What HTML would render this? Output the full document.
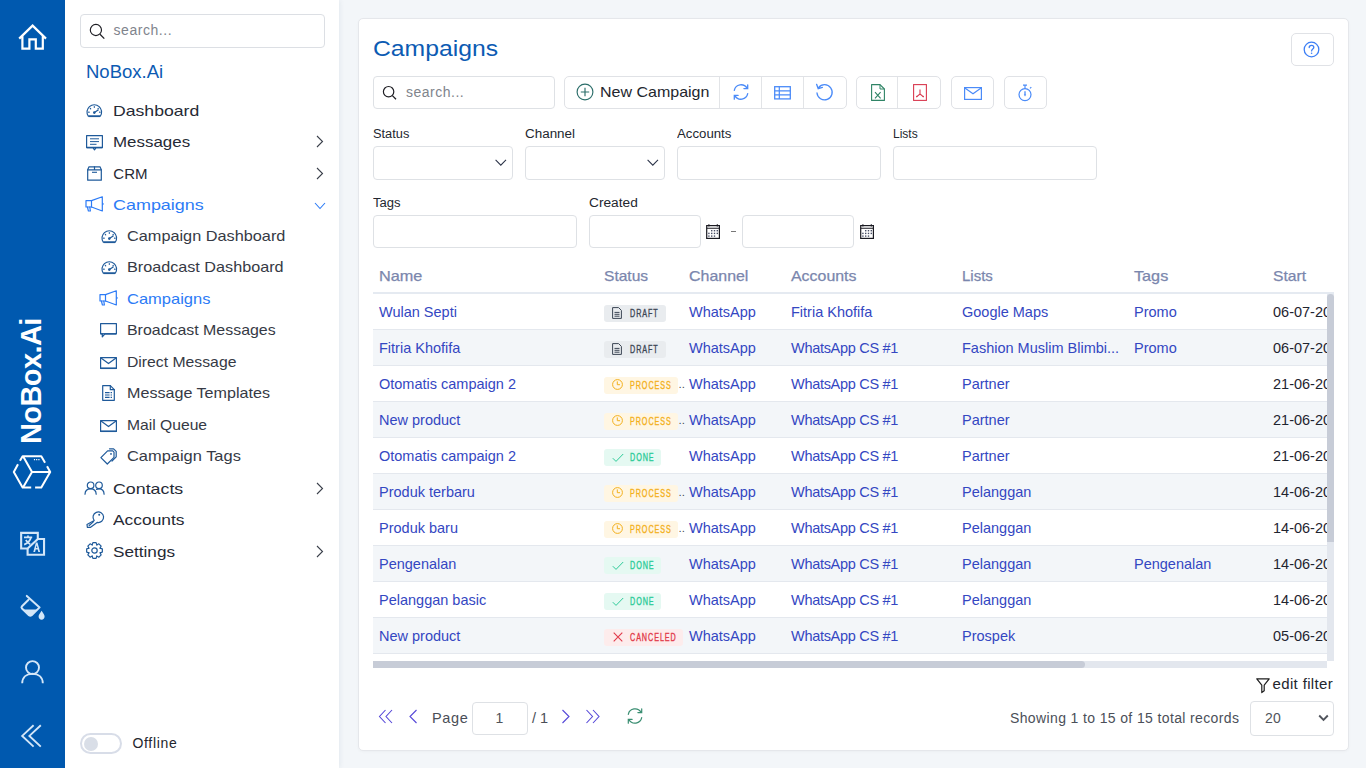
<!DOCTYPE html>
<html><head><meta charset="utf-8">
<style>
*{box-sizing:border-box;margin:0;padding:0}
html,body{width:1366px;height:768px;overflow:hidden;background:#F3F6F9;font-family:"Liberation Sans",sans-serif;color:#2B2F3A}
.abs{position:absolute}
#rail{position:absolute;left:0;top:0;width:65px;height:768px;background:#0059AF}
#side{position:absolute;left:65px;top:0;width:274px;height:768px;background:#fff;box-shadow:1px 0 5px rgba(20,50,100,0.07)}
.sbox{position:absolute;border:1px solid #DCDFE4;border-radius:4px;background:#fff}
.t{position:absolute;white-space:nowrap;line-height:1}
.mi{position:absolute;left:113.3px;font-size:15px;transform-origin:0 0;color:#2A2E39;white-space:nowrap;line-height:1}
.si{position:absolute;left:126.9px;font-size:14.5px;transform-origin:0 0;color:#3A3E48;white-space:nowrap;line-height:1}
.ico{position:absolute;overflow:visible}
#card{position:absolute;left:358px;top:18px;width:991px;height:733px;background:#fff;border:1px solid #E5E7EB;border-radius:5px;box-shadow:0 1px 3px rgba(0,0,0,0.03)}
.btn{position:absolute;border:1px solid #E0E2E6;border-radius:5px;background:#fff}
.lbl{position:absolute;font-size:12.5px;transform-origin:0 0;color:#23272F;white-space:nowrap;line-height:1}
.inp{position:absolute;border:1px solid #DEE1E5;border-radius:4px;background:#fff}
.th{position:absolute;top:269px;font-size:14.5px;transform-origin:0 0;-webkit-text-stroke:0.25px #7C88AC;color:#7A86AE;white-space:nowrap;line-height:1}
.row{position:absolute;left:373px;width:954px;height:36px;border-bottom:1px solid #E4E8EE}
.cell{position:absolute;font-size:14px;color:#3447C2;white-space:nowrap;line-height:1}
.badge{position:absolute;height:17px;border-radius:3px;font-size:10px;font-weight:normal;-webkit-text-stroke:0.35px currentColor;letter-spacing:1.3px;line-height:17.8px;white-space:nowrap}
</style></head><body>

<div id="rail"></div>
<div id="side"></div>
<div id="card"></div>
<div class="t" style="left:373px;top:37.6px;font-size:22px;transform:scaleX(1.124);transform-origin:0 0;color:#0C5BB3">Campaigns</div>
<!-- help -->
<div class="btn" style="left:1291px;top:33px;width:43px;height:33px"></div>
<svg class="ico" style="left:1303px;top:41px" width="17" height="17" viewBox="0 0 17 17"><circle cx="8.5" cy="8.5" r="7.3" fill="none" stroke="#3D7FF5" stroke-width="1.3"/><path fill="none" stroke="#3D7FF5" stroke-width="1.3" stroke-linecap="round" d="M6.2 6.6 C6.2 5.2 7.2 4.4 8.5 4.4 C9.8 4.4 10.8 5.2 10.8 6.5 C10.8 8 8.6 8.2 8.6 9.9"/><circle cx="8.6" cy="12.2" r="0.8" fill="#3D7FF5"/></svg>
<!-- search -->
<div class="inp" style="left:373px;top:76px;width:182px;height:33px"></div>
<svg class="ico" style="left:381px;top:84px" width="18" height="18" viewBox="0 0 18 18"><circle cx="7.6" cy="7.7" r="5.2" fill="none" stroke="#1E1E24" stroke-width="1.2"/><line x1="11.4" y1="11.6" x2="15" y2="15.2" stroke="#1E1E24" stroke-width="1.3"/></svg>
<div class="t" style="left:406px;top:84.7px;font-size:14px;letter-spacing:0.5px;color:#80848C">search...</div>
<!-- toolbar group 1 -->
<div class="btn" style="left:564px;top:76px;width:283px;height:33px"></div>
<div class="abs" style="left:719px;top:77px;width:1px;height:31px;background:#E2E4E7"></div>
<div class="abs" style="left:761px;top:77px;width:1px;height:31px;background:#E2E4E7"></div>
<div class="abs" style="left:803px;top:77px;width:1px;height:31px;background:#E2E4E7"></div>
<svg class="ico" style="left:576px;top:83px" width="18" height="18" viewBox="0 0 18 18"><circle cx="9" cy="9" r="7.9" fill="none" stroke="#2C6E6A" stroke-width="1.15"/><path stroke="#2C6E6A" stroke-width="1.15" d="M9 4.8V13.2M4.8 9H13.2"/></svg>
<div class="t" style="left:600px;top:84.3px;font-size:15px;transform:scaleX(1.067);transform-origin:0 0;color:#23262E">New Campaign</div>
<!-- refresh -->
<svg class="ico" style="left:732px;top:83px" width="18" height="18" viewBox="0 0 18 18"><path fill="none" stroke="#4B8BF8" stroke-width="1.3" stroke-linecap="round" d="M2.3 7.3 A6.9 6.9 0 0 1 15 5.2 M15.7 1.8 V5.6 H11.9 M15.7 10.7 A6.9 6.9 0 0 1 3 12.8 M2.3 16.2 V12.4 H6.1"/></svg>
<!-- table icon -->
<svg class="ico" style="left:774px;top:85.5px" width="17" height="14" viewBox="0 0 17 14"><rect x="0.7" y="0.7" width="15.6" height="12.2" fill="none" stroke="#4B8BF8" stroke-width="1.3"/><path stroke="#4B8BF8" stroke-width="1.2" d="M0.7 4.8H16.3M0.7 8.8H16.3M5.3 0.7V12.9"/></svg>
<!-- undo -->
<svg class="ico" style="left:815px;top:83px" width="19" height="18" viewBox="0 0 19 18"><path fill="none" stroke="#4B8BF8" stroke-width="1.3" stroke-linecap="round" d="M3.6 4.6 A7.6 7.6 0 1 1 2 10 M1.6 1.3 L3.2 5.6 L7.4 4.4"/></svg>
<!-- group 2 -->
<div class="btn" style="left:856px;top:76px;width:85px;height:33px"></div>
<div class="abs" style="left:897px;top:77px;width:1px;height:31px;background:#E2E4E7"></div>
<svg class="ico" style="left:870.5px;top:83.5px" width="14" height="17" viewBox="0 0 14 17"><path fill="none" stroke="#2F8466" stroke-width="1.1" stroke-linejoin="round" d="M0.6 0.6H9L13.4 5V16.4H0.6Z"/><path fill="none" stroke="#2F8466" stroke-width="1" d="M9 0.6V5H13.4"/><path fill="none" stroke="#2F8466" stroke-width="1.1" d="M4 8.2L9.6 14.4M9.6 8.2L4 14.4"/></svg>
<svg class="ico" style="left:912.5px;top:83.5px" width="14" height="17" viewBox="0 0 14 17"><rect x="0.6" y="0.6" width="12.8" height="15.8" fill="none" stroke="#D93A50" stroke-width="1.1"/><path fill="none" stroke="#D93A50" stroke-width="1.1" stroke-linejoin="round" d="M7 5.5V10 M7 10 L3.8 12.6 M7 10 L10.2 12.6"/><circle cx="3.8" cy="12.6" r="0.8" fill="#D93A50"/><circle cx="10.2" cy="12.6" r="0.8" fill="#D93A50"/></svg>
<!-- mail -->
<div class="btn" style="left:951px;top:76px;width:43px;height:33px"></div>
<svg class="ico" style="left:963.5px;top:86.5px" width="18" height="13" viewBox="0 0 18 13"><rect x="0.6" y="0.6" width="16.8" height="11.8" fill="none" stroke="#4B8BF8" stroke-width="1.2"/><path fill="none" stroke="#4B8BF8" stroke-width="1.2" d="M0.9 1L9 6.8L17.1 1"/></svg>
<!-- timer -->
<div class="btn" style="left:1004px;top:76px;width:43px;height:33px"></div>
<svg class="ico" style="left:1017.5px;top:83.5px" width="15" height="18" viewBox="0 0 15 18"><circle cx="7" cy="10.6" r="6" fill="none" stroke="#4B8BF8" stroke-width="1.2"/><path stroke="#4B8BF8" stroke-width="1.2" d="M5 1.2H9M7 1.2V4.6M12 4.4L13.3 3.1"/><path stroke="#4B8BF8" stroke-width="1.3" d="M7 7.2V11"/><path fill="#4B8BF8" d="M5.8 10.6 L8.2 10.6 L7 12.6Z"/></svg>
<!-- filters -->
<div class="lbl" style="left:373.0px;top:127.7px;transform:scaleX(1.025)">Status</div>
<div class="lbl" style="left:525.0px;top:127.7px;transform:scaleX(1.075)">Channel</div>
<div class="lbl" style="left:677.0px;top:127.7px;transform:scaleX(1.058)">Accounts</div>
<div class="lbl" style="left:893.0px;top:127.7px;transform:scaleX(0.96)">Lists</div>
<div class="inp" style="left:373px;top:146px;width:140px;height:34px"></div>
<svg class="ico" style="left:495px;top:159px" width="12" height="8" viewBox="0 0 12 8"><path fill="none" stroke="#2B3348" stroke-width="1.05" d="M0.6 0.8L5.8 6.2L11 0.8"/></svg>
<div class="inp" style="left:525px;top:146px;width:140px;height:34px"></div>
<svg class="ico" style="left:647px;top:159px" width="12" height="8" viewBox="0 0 12 8"><path fill="none" stroke="#2B3348" stroke-width="1.05" d="M0.6 0.8L5.8 6.2L11 0.8"/></svg>
<div class="inp" style="left:677px;top:146px;width:204px;height:34px"></div>
<div class="inp" style="left:893px;top:146px;width:204px;height:34px"></div>
<div class="lbl" style="left:373.0px;top:196.5px;transform:scaleX(1.045)">Tags</div>
<div class="lbl" style="left:588.5px;top:196.5px;transform:scaleX(1.097)">Created</div>
<div class="inp" style="left:373px;top:215px;width:204px;height:33px"></div>
<div class="inp" style="left:589px;top:215px;width:112px;height:33px"></div>
<div class="inp" style="left:742px;top:215px;width:112px;height:33px"></div>
<svg class="ico" style="left:705px;top:222.5px" width="16" height="17" viewBox="0 0 16 17"><rect x="1.7" y="2.6" width="12.7" height="12.8" fill="none" stroke="#1A1A22" stroke-width="1.2"/><path stroke="#1A1A22" stroke-width="1.1" d="M1.7 5.2H14.4M3.9 1.2V3.4M12.3 1.2V3.4"/><g fill="#4A4F66"><rect x="6.0" y="7.0" width="1.4" height="1.4"/><rect x="8.8" y="7.0" width="1.4" height="1.4"/><rect x="11.6" y="7.0" width="1.4" height="1.4"/><rect x="3.2" y="9.7" width="1.4" height="1.4"/><rect x="6.0" y="9.7" width="1.4" height="1.4"/><rect x="8.8" y="9.7" width="1.4" height="1.4"/><rect x="11.6" y="9.7" width="1.4" height="1.4"/><rect x="3.2" y="12.4" width="1.4" height="1.4"/><rect x="6.0" y="12.4" width="1.4" height="1.4"/><rect x="8.8" y="12.4" width="1.4" height="1.4"/></g></svg>
<div class="abs" style="left:731px;top:231px;width:5px;height:1.2px;background:#777"></div>
<svg class="ico" style="left:859px;top:222.5px" width="16" height="17" viewBox="0 0 16 17"><rect x="1.7" y="2.6" width="12.7" height="12.8" fill="none" stroke="#1A1A22" stroke-width="1.2"/><path stroke="#1A1A22" stroke-width="1.1" d="M1.7 5.2H14.4M3.9 1.2V3.4M12.3 1.2V3.4"/><g fill="#4A4F66"><rect x="6.0" y="7.0" width="1.4" height="1.4"/><rect x="8.8" y="7.0" width="1.4" height="1.4"/><rect x="11.6" y="7.0" width="1.4" height="1.4"/><rect x="3.2" y="9.7" width="1.4" height="1.4"/><rect x="6.0" y="9.7" width="1.4" height="1.4"/><rect x="8.8" y="9.7" width="1.4" height="1.4"/><rect x="11.6" y="9.7" width="1.4" height="1.4"/><rect x="3.2" y="12.4" width="1.4" height="1.4"/><rect x="6.0" y="12.4" width="1.4" height="1.4"/><rect x="8.8" y="12.4" width="1.4" height="1.4"/></g></svg>

<!-- table header -->
<div class="th" style="left:379px;transform:scaleX(1.12)">Name</div>
<div class="th" style="left:604px;transform:scaleX(1.073)">Status</div>
<div class="th" style="left:689px;transform:scaleX(1.10)">Channel</div>
<div class="th" style="left:791px;transform:scaleX(1.098)">Accounts</div>
<div class="th" style="left:962px;transform:scaleX(1.035)">Lists</div>
<div class="th" style="left:1134px;transform:scaleX(1.118)">Tags</div>
<div class="th" style="left:1273px;transform:scaleX(1.078)">Start</div>
<div class="abs" style="left:0;top:0;width:1327px;height:661px;overflow:hidden">
<div class="row" style="top:294px;background:#fff"></div>
<div class="t" style="left:379px;top:304.9px;font-size:14.5px;color:#3447C2">Wulan Septi</div>
<div class="badge" style="left:604px;top:305px;width:62px;background:#E9ECEF;color:#3C4654"><svg class="ico" style="left:8px;top:2px" width="10" height="12" viewBox="0 0 10 12"><path fill="none" stroke="#3C4654" stroke-width="1" d="M0.6 0.6H6.6L9.4 3.4V11.4H0.6Z"/><path fill="none" stroke="#3C4654" stroke-width="1" d="M2.5 5.4H7.5M2.5 7.3H7.5M2.5 9.2H7.5"/></svg><span style="position:absolute;left:25.6px;top:0;transform:scaleX(0.72);transform-origin:0 0">DRAFT</span></div>
<div class="t" style="left:689px;top:304.9px;font-size:14.5px;color:#3447C2">WhatsApp</div>
<div class="t" style="left:791px;top:304.9px;font-size:14.5px;color:#3447C2">Fitria Khofifa</div>
<div class="t" style="left:962px;top:304.9px;font-size:14.5px;color:#3447C2">Google Maps</div>
<div class="t" style="left:1134px;top:304.9px;font-size:14.5px;color:#3447C2">Promo</div>
<div class="t" style="left:1273px;top:304.9px;font-size:14.5px;color:#1F2430">06-07-2023</div>
<div class="row" style="top:330px;background:#F3F6F9"></div>
<div class="t" style="left:379px;top:340.9px;font-size:14.5px;color:#3447C2">Fitria Khofifa</div>
<div class="badge" style="left:604px;top:341px;width:62px;background:#E9ECEF;color:#3C4654"><svg class="ico" style="left:8px;top:2px" width="10" height="12" viewBox="0 0 10 12"><path fill="none" stroke="#3C4654" stroke-width="1" d="M0.6 0.6H6.6L9.4 3.4V11.4H0.6Z"/><path fill="none" stroke="#3C4654" stroke-width="1" d="M2.5 5.4H7.5M2.5 7.3H7.5M2.5 9.2H7.5"/></svg><span style="position:absolute;left:25.6px;top:0;transform:scaleX(0.72);transform-origin:0 0">DRAFT</span></div>
<div class="t" style="left:689px;top:340.9px;font-size:14.5px;color:#3447C2">WhatsApp</div>
<div class="t" style="left:791px;top:340.9px;font-size:14.5px;color:#3447C2;letter-spacing:-0.3px">WhatsApp CS #1</div>
<div class="t" style="left:962px;top:340.9px;font-size:14.5px;color:#3447C2">Fashion Muslim Blimbi...</div>
<div class="t" style="left:1134px;top:340.9px;font-size:14.5px;color:#3447C2">Promo</div>
<div class="t" style="left:1273px;top:340.9px;font-size:14.5px;color:#1F2430">06-07-2023</div>
<div class="row" style="top:366px;background:#fff"></div>
<div class="t" style="left:379px;top:376.9px;font-size:14.5px;color:#3447C2">Otomatis campaign 2</div>
<div class="badge" style="left:604px;top:377px;width:74px;background:#FFF6E3;color:#F3B01C"><svg class="ico" style="left:8px;top:2px" width="11" height="11" viewBox="0 0 11 11"><circle cx="5.5" cy="5.5" r="4.9" fill="none" stroke="#F3B01C" stroke-width="1"/><path fill="none" stroke="#F3B01C" stroke-width="1" d="M5.3 2.4V5.7H8"/></svg><span style="position:absolute;left:25.6px;top:0;transform:scaleX(0.72);transform-origin:0 0">PROCESS</span></div>
<div class="t" style="left:678.5px;top:379.4px;font-size:11.5px;color:#4A4A50">..</div>
<div class="t" style="left:689px;top:376.9px;font-size:14.5px;color:#3447C2">WhatsApp</div>
<div class="t" style="left:791px;top:376.9px;font-size:14.5px;color:#3447C2;letter-spacing:-0.3px">WhatsApp CS #1</div>
<div class="t" style="left:962px;top:376.9px;font-size:14.5px;color:#3447C2">Partner</div>
<div class="t" style="left:1273px;top:376.9px;font-size:14.5px;color:#1F2430">21-06-2023</div>
<div class="row" style="top:402px;background:#F3F6F9"></div>
<div class="t" style="left:379px;top:412.9px;font-size:14.5px;color:#3447C2">New product</div>
<div class="badge" style="left:604px;top:413px;width:74px;background:#FFF6E3;color:#F3B01C"><svg class="ico" style="left:8px;top:2px" width="11" height="11" viewBox="0 0 11 11"><circle cx="5.5" cy="5.5" r="4.9" fill="none" stroke="#F3B01C" stroke-width="1"/><path fill="none" stroke="#F3B01C" stroke-width="1" d="M5.3 2.4V5.7H8"/></svg><span style="position:absolute;left:25.6px;top:0;transform:scaleX(0.72);transform-origin:0 0">PROCESS</span></div>
<div class="t" style="left:678.5px;top:415.4px;font-size:11.5px;color:#4A4A50">..</div>
<div class="t" style="left:689px;top:412.9px;font-size:14.5px;color:#3447C2">WhatsApp</div>
<div class="t" style="left:791px;top:412.9px;font-size:14.5px;color:#3447C2;letter-spacing:-0.3px">WhatsApp CS #1</div>
<div class="t" style="left:962px;top:412.9px;font-size:14.5px;color:#3447C2">Partner</div>
<div class="t" style="left:1273px;top:412.9px;font-size:14.5px;color:#1F2430">21-06-2023</div>
<div class="row" style="top:438px;background:#fff"></div>
<div class="t" style="left:379px;top:448.9px;font-size:14.5px;color:#3447C2">Otomatis campaign 2</div>
<div class="badge" style="left:604px;top:449px;width:57px;background:#E5F9F2;color:#2CCB98"><svg class="ico" style="left:8px;top:3.5px" width="12" height="10" viewBox="0 0 12 10"><path fill="none" stroke="#2CCB98" stroke-width="1" d="M0.8 5.2L4 8.4L11.2 1"/></svg><span style="position:absolute;left:25.6px;top:0;transform:scaleX(0.72);transform-origin:0 0">DONE</span></div>
<div class="t" style="left:689px;top:448.9px;font-size:14.5px;color:#3447C2">WhatsApp</div>
<div class="t" style="left:791px;top:448.9px;font-size:14.5px;color:#3447C2;letter-spacing:-0.3px">WhatsApp CS #1</div>
<div class="t" style="left:962px;top:448.9px;font-size:14.5px;color:#3447C2">Partner</div>
<div class="t" style="left:1273px;top:448.9px;font-size:14.5px;color:#1F2430">21-06-2023</div>
<div class="row" style="top:474px;background:#F3F6F9"></div>
<div class="t" style="left:379px;top:484.9px;font-size:14.5px;color:#3447C2">Produk terbaru</div>
<div class="badge" style="left:604px;top:485px;width:74px;background:#FFF6E3;color:#F3B01C"><svg class="ico" style="left:8px;top:2px" width="11" height="11" viewBox="0 0 11 11"><circle cx="5.5" cy="5.5" r="4.9" fill="none" stroke="#F3B01C" stroke-width="1"/><path fill="none" stroke="#F3B01C" stroke-width="1" d="M5.3 2.4V5.7H8"/></svg><span style="position:absolute;left:25.6px;top:0;transform:scaleX(0.72);transform-origin:0 0">PROCESS</span></div>
<div class="t" style="left:678.5px;top:487.4px;font-size:11.5px;color:#4A4A50">..</div>
<div class="t" style="left:689px;top:484.9px;font-size:14.5px;color:#3447C2">WhatsApp</div>
<div class="t" style="left:791px;top:484.9px;font-size:14.5px;color:#3447C2;letter-spacing:-0.3px">WhatsApp CS #1</div>
<div class="t" style="left:962px;top:484.9px;font-size:14.5px;color:#3447C2">Pelanggan</div>
<div class="t" style="left:1273px;top:484.9px;font-size:14.5px;color:#1F2430">14-06-2023</div>
<div class="row" style="top:510px;background:#fff"></div>
<div class="t" style="left:379px;top:520.9px;font-size:14.5px;color:#3447C2">Produk baru</div>
<div class="badge" style="left:604px;top:521px;width:74px;background:#FFF6E3;color:#F3B01C"><svg class="ico" style="left:8px;top:2px" width="11" height="11" viewBox="0 0 11 11"><circle cx="5.5" cy="5.5" r="4.9" fill="none" stroke="#F3B01C" stroke-width="1"/><path fill="none" stroke="#F3B01C" stroke-width="1" d="M5.3 2.4V5.7H8"/></svg><span style="position:absolute;left:25.6px;top:0;transform:scaleX(0.72);transform-origin:0 0">PROCESS</span></div>
<div class="t" style="left:678.5px;top:523.4px;font-size:11.5px;color:#4A4A50">..</div>
<div class="t" style="left:689px;top:520.9px;font-size:14.5px;color:#3447C2">WhatsApp</div>
<div class="t" style="left:791px;top:520.9px;font-size:14.5px;color:#3447C2;letter-spacing:-0.3px">WhatsApp CS #1</div>
<div class="t" style="left:962px;top:520.9px;font-size:14.5px;color:#3447C2">Pelanggan</div>
<div class="t" style="left:1273px;top:520.9px;font-size:14.5px;color:#1F2430">14-06-2023</div>
<div class="row" style="top:546px;background:#F3F6F9"></div>
<div class="t" style="left:379px;top:556.9px;font-size:14.5px;color:#3447C2">Pengenalan</div>
<div class="badge" style="left:604px;top:557px;width:57px;background:#E5F9F2;color:#2CCB98"><svg class="ico" style="left:8px;top:3.5px" width="12" height="10" viewBox="0 0 12 10"><path fill="none" stroke="#2CCB98" stroke-width="1" d="M0.8 5.2L4 8.4L11.2 1"/></svg><span style="position:absolute;left:25.6px;top:0;transform:scaleX(0.72);transform-origin:0 0">DONE</span></div>
<div class="t" style="left:689px;top:556.9px;font-size:14.5px;color:#3447C2">WhatsApp</div>
<div class="t" style="left:791px;top:556.9px;font-size:14.5px;color:#3447C2;letter-spacing:-0.3px">WhatsApp CS #1</div>
<div class="t" style="left:962px;top:556.9px;font-size:14.5px;color:#3447C2">Pelanggan</div>
<div class="t" style="left:1134px;top:556.9px;font-size:14.5px;color:#3447C2">Pengenalan</div>
<div class="t" style="left:1273px;top:556.9px;font-size:14.5px;color:#1F2430">14-06-2023</div>
<div class="row" style="top:582px;background:#fff"></div>
<div class="t" style="left:379px;top:592.9px;font-size:14.5px;color:#3447C2">Pelanggan basic</div>
<div class="badge" style="left:604px;top:593px;width:57px;background:#E5F9F2;color:#2CCB98"><svg class="ico" style="left:8px;top:3.5px" width="12" height="10" viewBox="0 0 12 10"><path fill="none" stroke="#2CCB98" stroke-width="1" d="M0.8 5.2L4 8.4L11.2 1"/></svg><span style="position:absolute;left:25.6px;top:0;transform:scaleX(0.72);transform-origin:0 0">DONE</span></div>
<div class="t" style="left:689px;top:592.9px;font-size:14.5px;color:#3447C2">WhatsApp</div>
<div class="t" style="left:791px;top:592.9px;font-size:14.5px;color:#3447C2;letter-spacing:-0.3px">WhatsApp CS #1</div>
<div class="t" style="left:962px;top:592.9px;font-size:14.5px;color:#3447C2">Pelanggan</div>
<div class="t" style="left:1273px;top:592.9px;font-size:14.5px;color:#1F2430">14-06-2023</div>
<div class="row" style="top:618px;background:#F3F6F9"></div>
<div class="t" style="left:379px;top:628.9px;font-size:14.5px;color:#3447C2">New product</div>
<div class="badge" style="left:604px;top:629px;width:79px;background:#FDECEC;color:#E23A4A"><svg class="ico" style="left:8.5px;top:3.2px" width="10" height="10" viewBox="0 0 10 10"><path fill="none" stroke="#E23A4A" stroke-width="1.1" d="M0.7 0.7L9.3 9.3M9.3 0.7L0.7 9.3"/></svg><span style="position:absolute;left:25.6px;top:0;transform:scaleX(0.72);transform-origin:0 0">CANCELED</span></div>
<div class="t" style="left:689px;top:628.9px;font-size:14.5px;color:#3447C2">WhatsApp</div>
<div class="t" style="left:791px;top:628.9px;font-size:14.5px;color:#3447C2;letter-spacing:-0.3px">WhatsApp CS #1</div>
<div class="t" style="left:962px;top:628.9px;font-size:14.5px;color:#3447C2">Prospek</div>
<div class="t" style="left:1273px;top:628.9px;font-size:14.5px;color:#1F2430">05-06-2023</div>
</div>
<div class="abs" style="left:373px;top:292px;width:961px;height:2px;background:#E5EAF1"></div>
<!-- scrollbars -->
<div class="abs" style="left:1327px;top:294px;width:7px;height:367px;background:#E3E7EE"></div>
<div class="abs" style="left:1327px;top:294px;width:7px;height:248px;background:#C7CCD7;border-radius:4px 4px 0 0"></div>
<div class="abs" style="left:373px;top:661px;width:954px;height:7px;background:#E3E7EE"></div>
<div class="abs" style="left:373px;top:661px;width:712px;height:7px;background:#C7CCD7;border-radius:0 4px 4px 0"></div>

<!-- edit filter -->
<svg class="ico" style="left:1256px;top:677.5px" width="14" height="16" viewBox="0 0 14 16"><path fill="none" stroke="#1E1E1E" stroke-width="1.2" stroke-linejoin="round" d="M0.8 0.8H13.2L8.2 7.2V12.8L5.8 14.6V7.2Z"/></svg>
<div class="t" style="left:1272.5px;top:676px;font-size:15px;letter-spacing:0.36px;color:#23262E">edit filter</div>

<!-- pagination -->
<svg class="ico" style="left:378px;top:709px" width="16" height="15" viewBox="0 0 16 15"><path fill="none" stroke="#5547D8" stroke-width="1.1" d="M7.5 1L1.5 7.5L7.5 14M14 1L8 7.5L14 14"/></svg>
<svg class="ico" style="left:408px;top:709px" width="10" height="15" viewBox="0 0 10 15"><path fill="none" stroke="#5547D8" stroke-width="1.1" d="M8.5 1L2 7.5L8.5 14"/></svg>
<div class="t" style="left:432px;top:711.3px;font-size:14.5px;letter-spacing:0.63px;color:#4A4E57">Page</div>
<div class="inp" style="left:472px;top:702px;width:56px;height:33px"></div>
<div class="t" style="left:495.5px;top:711.3px;font-size:14px;color:#50545C">1</div>
<div class="t" style="left:532px;top:711.3px;font-size:14.5px;color:#4A4E57">/ 1</div>
<svg class="ico" style="left:561px;top:709px" width="10" height="15" viewBox="0 0 10 15"><path fill="none" stroke="#5547D8" stroke-width="1.1" d="M1.5 1L8 7.5L1.5 14"/></svg>
<svg class="ico" style="left:585px;top:709px" width="16" height="15" viewBox="0 0 16 15"><path fill="none" stroke="#5547D8" stroke-width="1.1" d="M1.5 1L7.5 7.5L1.5 14M8 1L14 7.5L8 14"/></svg>
<svg class="ico" style="left:625.5px;top:707px" width="18" height="18" viewBox="0 0 18 18"><path fill="none" stroke="#3A8E72" stroke-width="1.2" stroke-linecap="round" d="M2.3 7.3 A6.9 6.9 0 0 1 15 5.2 M15.7 1.8 V5.6 H11.9 M15.7 10.7 A6.9 6.9 0 0 1 3 12.8 M2.3 16.2 V12.4 H6.1"/></svg>

<div class="t" style="left:1010px;top:711px;font-size:14px;letter-spacing:0.37px;color:#4B4F59">Showing 1 to 15 of 15 total records</div>
<div class="inp" style="left:1250px;top:701px;width:84px;height:35px"></div>
<div class="t" style="left:1265px;top:711.2px;font-size:14px;letter-spacing:0.3px;color:#50545C">20</div>
<svg class="ico" style="left:1318px;top:714px" width="11" height="8" viewBox="0 0 11 8"><path fill="none" stroke="#50545C" stroke-width="1.9" d="M1.2 1.5L5.5 5.8L9.8 1.5"/></svg>


<!-- sidebar search -->
<div class="sbox" style="left:80px;top:14px;width:245px;height:34px"></div>
<svg class="ico" style="left:88px;top:22px" width="20" height="20" viewBox="0 0 20 20"><circle cx="7.9" cy="8" r="5.6" fill="none" stroke="#1E1E24" stroke-width="1.15"/><line x1="12" y1="12.2" x2="16.3" y2="16.6" stroke="#1E1E24" stroke-width="1.25"/></svg>
<div class="t" style="left:113.5px;top:23.2px;font-size:14px;color:#80848C;letter-spacing:0.55px">search...</div>

<div class="t" style="left:86px;top:62.7px;font-size:18.5px;color:#0C5BB3">NoBox.Ai</div>

<div class="mi" style="top:102.8px;transform:scaleX(1.176);color:#262A35">Dashboard</div>
<div class="mi" style="top:134.3px;transform:scaleX(1.128);color:#262A35">Messages</div>
<div class="mi" style="top:165.8px;transform:scaleX(1.0);color:#262A35">CRM</div>
<div class="mi" style="top:197.3px;transform:scaleX(1.196);color:#2C7BF6">Campaigns</div>
<div class="mi" style="top:480.8px;transform:scaleX(1.187);color:#262A35">Contacts</div>
<div class="mi" style="top:512.3px;transform:scaleX(1.16);color:#262A35">Accounts</div>
<div class="mi" style="top:543.8px;transform:scaleX(1.145);color:#262A35">Settings</div>
<div class="si" style="top:228.9px;transform:scaleX(1.123);color:#363A45">Campaign Dashboard</div>
<div class="si" style="top:260.4px;transform:scaleX(1.116);color:#363A45">Broadcast Dashboard</div>
<div class="si" style="top:291.9px;transform:scaleX(1.138);color:#2C7BF6">Campaigns</div>
<div class="si" style="top:323.4px;transform:scaleX(1.098);color:#363A45">Broadcast Messages</div>
<div class="si" style="top:354.9px;transform:scaleX(1.086);color:#363A45">Direct Message</div>
<div class="si" style="top:386.4px;transform:scaleX(1.111);color:#363A45">Message Templates</div>
<div class="si" style="top:417.9px;transform:scaleX(1.08);color:#363A45">Mail Queue</div>
<div class="si" style="top:449.4px;transform:scaleX(1.133);color:#363A45">Campaign Tags</div>
<svg class="ico" style="left:86px;top:102.5px" width="17" height="15" viewBox="0 0 17 15"><path fill="none" stroke="#1F5A9A" stroke-width="1.2" stroke-linecap="round" stroke-linejoin="round" d="M2.3 13.2 A7.3 7.3 0 1 1 14.3 13.2 Z"/><path fill="none" stroke="#1F5A9A" stroke-width="1.6" d="M2.6 13.3H14"/><path fill="none" stroke="#1F5A9A" stroke-width="1.2" stroke-linecap="round" stroke-linejoin="round" stroke-width="1.3" d="M8.3 9.6 L12.2 7"/><circle cx="8.3" cy="9.6" r="1.3" fill="#1F5A9A"/><path fill="none" stroke="#1F5A9A" stroke-width="1.2" stroke-linecap="round" stroke-linejoin="round" stroke-width="1" d="M2.6 9.2h.6M4.3 5.4l.4.4M8.3 3.7v.6M12.3 5.4l-.4.4M13.5 9.2h.6"/></svg>
<svg class="ico" style="left:85.6px;top:134.5px" width="17" height="16" viewBox="0 0 17 16"><path fill="none" stroke="#1F5A9A" stroke-width="1.2" stroke-linecap="round" stroke-linejoin="round" d="M0.6 0.6 H16.4 V12.6 H10 L8.5 14.8 L7 12.6 H0.6 Z"/><path fill="none" stroke="#1F5A9A" stroke-width="1.5" d="M0.8 12.5H16.2"/><path fill="none" stroke="#1F5A9A" stroke-width="1" d="M4 3.8H13M4 6.6H13M4 9.3H10.5"/></svg>
<svg class="ico" style="left:87px;top:165.5px" width="15" height="15" viewBox="0 0 15 15"><path fill="none" stroke="#1F5A9A" stroke-width="1.2" stroke-linecap="round" stroke-linejoin="round" d="M0.7 3.8 L2 0.8 H13 L14.3 3.8 V14.2 H0.7 Z"/><path fill="none" stroke="#1F5A9A" stroke-width="1.2" stroke-linecap="round" stroke-linejoin="round" d="M0.8 3.8H14.2M7.5 0.8V3.8"/><path fill="none" stroke="#1F5A9A" stroke-width="1.1" d="M5 6.3H10"/></svg>
<svg class="ico" style="left:85px;top:195.5px" width="20" height="16" viewBox="0 0 20 16"><path fill="none" stroke="#2C7BF6" stroke-width="1.2" stroke-linecap="round" stroke-linejoin="round" d="M1 4.6 H6.5 L17.3 0.8 V15 L6.5 11 H1 Z"/><path fill="none" stroke="#2C7BF6" stroke-width="1.2" stroke-linecap="round" stroke-linejoin="round" d="M6.5 4.6 V11"/><path fill="none" stroke="#2C7BF6" stroke-width="1.2" stroke-linecap="round" stroke-linejoin="round" d="M2.4 11 L3.4 15 H5.4 L4.8 11.2"/><path fill="#2C7BF6" d="M17.3 6.2 L19 7.9 L17.3 9.6Z"/></svg>
<svg class="ico" style="left:100.5px;top:228.5px" width="17" height="15" viewBox="0 0 17 15"><path fill="none" stroke="#1F5A9A" stroke-width="1.2" stroke-linecap="round" stroke-linejoin="round" d="M2.3 13.2 A7.3 7.3 0 1 1 14.3 13.2 Z"/><path fill="none" stroke="#1F5A9A" stroke-width="1.6" d="M2.6 13.3H14"/><path fill="none" stroke="#1F5A9A" stroke-width="1.2" stroke-linecap="round" stroke-linejoin="round" stroke-width="1.3" d="M8.3 9.6 L12.2 7"/><circle cx="8.3" cy="9.6" r="1.3" fill="#1F5A9A"/><path fill="none" stroke="#1F5A9A" stroke-width="1.2" stroke-linecap="round" stroke-linejoin="round" stroke-width="1" d="M2.6 9.2h.6M4.3 5.4l.4.4M8.3 3.7v.6M12.3 5.4l-.4.4M13.5 9.2h.6"/></svg>
<svg class="ico" style="left:100.5px;top:260px" width="17" height="15" viewBox="0 0 17 15"><path fill="none" stroke="#1F5A9A" stroke-width="1.2" stroke-linecap="round" stroke-linejoin="round" d="M2.3 13.2 A7.3 7.3 0 1 1 14.3 13.2 Z"/><path fill="none" stroke="#1F5A9A" stroke-width="1.6" d="M2.6 13.3H14"/><path fill="none" stroke="#1F5A9A" stroke-width="1.2" stroke-linecap="round" stroke-linejoin="round" stroke-width="1.3" d="M8.3 9.6 L12.2 7"/><circle cx="8.3" cy="9.6" r="1.3" fill="#1F5A9A"/><path fill="none" stroke="#1F5A9A" stroke-width="1.2" stroke-linecap="round" stroke-linejoin="round" stroke-width="1" d="M2.6 9.2h.6M4.3 5.4l.4.4M8.3 3.7v.6M12.3 5.4l-.4.4M13.5 9.2h.6"/></svg>
<svg class="ico" style="left:98.8px;top:290px" width="20" height="16" viewBox="0 0 20 16"><path fill="none" stroke="#2C7BF6" stroke-width="1.2" stroke-linecap="round" stroke-linejoin="round" d="M1 4.6 H6.5 L17.3 0.8 V15 L6.5 11 H1 Z"/><path fill="none" stroke="#2C7BF6" stroke-width="1.2" stroke-linecap="round" stroke-linejoin="round" d="M6.5 4.6 V11"/><path fill="none" stroke="#2C7BF6" stroke-width="1.2" stroke-linecap="round" stroke-linejoin="round" d="M2.4 11 L3.4 15 H5.4 L4.8 11.2"/><path fill="#2C7BF6" d="M17.3 6.2 L19 7.9 L17.3 9.6Z"/></svg>
<svg class="ico" style="left:100px;top:323px" width="17" height="15" viewBox="0 0 17 15"><path fill="none" stroke="#1F5A9A" stroke-width="1.2" stroke-linecap="round" stroke-linejoin="round" d="M0.6 0.6 H16.4 V10.8 H5 L2.3 13.9 V10.8 H0.6 Z"/><path fill="none" stroke="#1F5A9A" stroke-width="1.4" d="M0.8 10.8H16.2"/></svg>
<svg class="ico" style="left:100px;top:357px" width="17" height="12" viewBox="0 0 17 12"><path fill="none" stroke="#1F5A9A" stroke-width="1.2" stroke-linecap="round" stroke-linejoin="round" d="M0.6 0.6 H16.4 V11.4 H0.6 Z"/><path fill="none" stroke="#1F5A9A" stroke-width="1.5" d="M0.8 11.3H16.2"/><path fill="none" stroke="#1F5A9A" stroke-width="1.2" stroke-linecap="round" stroke-linejoin="round" d="M1 1.1 L8.5 6.6 L16 1.1"/></svg>
<svg class="ico" style="left:101.8px;top:384.5px" width="13" height="16" viewBox="0 0 13 16"><path fill="none" stroke="#1F5A9A" stroke-width="1.2" stroke-linecap="round" stroke-linejoin="round" d="M0.7 0.7 H8.3 L12.3 4.7 V15.3 H0.7 Z"/><path fill="none" stroke="#1F5A9A" stroke-width="1.2" stroke-linecap="round" stroke-linejoin="round" d="M8.3 0.7 V4.7 H12.3"/><path fill="none" stroke="#1F5A9A" stroke-width="1.1" d="M3 7.6H7.6M8.6 7.6H10M3 10H7.6M8.6 10H10M3 12.4H7.6M8.6 12.4H10"/></svg>
<svg class="ico" style="left:100.3px;top:420px" width="17" height="12" viewBox="0 0 17 12"><path fill="none" stroke="#1F5A9A" stroke-width="1.2" stroke-linecap="round" stroke-linejoin="round" d="M0.6 0.6 H16.4 V11.4 H0.6 Z"/><path fill="none" stroke="#1F5A9A" stroke-width="1.5" d="M0.8 11.3H16.2"/><path fill="none" stroke="#1F5A9A" stroke-width="1.2" stroke-linecap="round" stroke-linejoin="round" d="M1 1.1 L8.5 6.6 L16 1.1"/></svg>
<svg class="ico" style="left:100.3px;top:448px" width="17" height="17" viewBox="0 0 17 17"><path fill="none" stroke="#1F5A9A" stroke-width="1.2" stroke-linecap="round" stroke-linejoin="round" d="M0.9 9.6 L7.6 2.9 H12.8 L14 4.1 V9.3 L7.3 16 Z"/><circle cx="11" cy="5.9" r="0.9" fill="#1F5A9A"/><path fill="none" stroke="#1F5A9A" stroke-width="1.2" stroke-linecap="round" stroke-linejoin="round" d="M9.5 0.8 H13.6 L16.2 3.4 V8.8 L12 13"/></svg>
<svg class="ico" style="left:84px;top:481px" width="21" height="14" viewBox="0 0 21 14"><circle fill="none" stroke="#1F5A9A" stroke-width="1.2" stroke-linecap="round" stroke-linejoin="round" cx="6.6" cy="4.3" r="3.3"/><path fill="none" stroke="#1F5A9A" stroke-width="1.2" stroke-linecap="round" stroke-linejoin="round" d="M1 13.2 C1.1 9.6 3.4 7.9 6.6 7.9 C9.8 7.9 12.1 9.6 12.2 13.2"/><circle fill="none" stroke="#1F5A9A" stroke-width="1.2" stroke-linecap="round" stroke-linejoin="round" cx="15" cy="4.3" r="3.3"/><path fill="none" stroke="#1F5A9A" stroke-width="1.2" stroke-linecap="round" stroke-linejoin="round" d="M12.6 8.4 C13.3 8.1 14.1 7.9 15 7.9 C18.2 7.9 20 9.6 20.1 13.2"/></svg>
<svg class="ico" style="left:86px;top:510px" width="18" height="18" viewBox="0 0 18 18"><path fill="none" stroke="#1F5A9A" stroke-width="1.2" stroke-linecap="round" stroke-linejoin="round" d="M8.2 10.6 A5.3 5.3 0 1 1 11.1 12.4 L4.6 17.3 H1.4 L1 14.6 Z"/><circle cx="13.2" cy="4.7" r="1" fill="#1F5A9A"/><path fill="none" stroke="#1F5A9A" stroke-width="1.2" stroke-linecap="round" stroke-linejoin="round" d="M3.2 15.5 L7.6 11.6"/></svg>
<svg class="ico" style="left:86px;top:542px" width="17" height="17" viewBox="0 0 17 17"><path fill="none" stroke="#1F5A9A" stroke-width="1.2" stroke-linecap="round" stroke-linejoin="round" d="M16.34 6.91 L16.34 10.09 L13.89 10.91 L14.01 10.61 L15.17 12.92 L12.92 15.17 L10.61 14.01 L10.91 13.89 L10.09 16.34 L6.91 16.34 L6.09 13.89 L6.39 14.01 L4.08 15.17 L1.83 12.92 L2.99 10.61 L3.11 10.91 L0.66 10.09 L0.66 6.91 L3.11 6.09 L2.99 6.39 L1.83 4.08 L4.08 1.83 L6.39 2.99 L6.09 3.11 L6.91 0.66 L10.09 0.66 L10.91 3.11 L10.61 2.99 L12.92 1.83 L15.17 4.08 L14.01 6.39 L13.89 6.09Z"/><circle fill="none" stroke="#1F5A9A" stroke-width="1.2" stroke-linecap="round" stroke-linejoin="round" cx="8.5" cy="8.5" r="2.7"/></svg>
<svg class="ico" style="left:316px;top:135.0px" width="8" height="13" viewBox="0 0 8 13"><path fill="none" stroke="#3A3F4A" stroke-width="1.1" d="M1 1 L6.5 6.5 L1 12"/></svg>
<svg class="ico" style="left:316px;top:166.5px" width="8" height="13" viewBox="0 0 8 13"><path fill="none" stroke="#3A3F4A" stroke-width="1.1" d="M1 1 L6.5 6.5 L1 12"/></svg>
<svg class="ico" style="left:316px;top:481.5px" width="8" height="13" viewBox="0 0 8 13"><path fill="none" stroke="#3A3F4A" stroke-width="1.1" d="M1 1 L6.5 6.5 L1 12"/></svg>
<svg class="ico" style="left:316px;top:544.5px" width="8" height="13" viewBox="0 0 8 13"><path fill="none" stroke="#3A3F4A" stroke-width="1.1" d="M1 1 L6.5 6.5 L1 12"/></svg>
<svg class="ico" style="left:313.5px;top:201.5px" width="12" height="8" viewBox="0 0 12 8"><path fill="none" stroke="#2C7BF6" stroke-width="1.1" d="M1 1 L6 6.5 L11 1"/></svg>
<!-- rail icons -->
<svg class="ico" style="left:18px;top:24px" width="29" height="26" viewBox="0 0 29 26"><path fill="none" stroke="#fff" stroke-width="2.2" stroke-linejoin="miter" d="M1.2 14.6 L14.6 1.6 L28 14.6 M4.4 11.6 V24.7 H11.4 V15.4 H17.8 V24.7 H24.8 V11.6"/></svg>
<div class="t" style="left:16.5px;top:444px;font-size:29px;font-weight:bold;letter-spacing:-0.6px;color:#fff;transform:rotate(-90deg);transform-origin:0 0;">NoBox.Ai</div>
<svg class="ico" style="left:13px;top:455px" width="38" height="34" viewBox="0 0 38 34"><g fill="none" stroke="#fff" stroke-width="2" stroke-linejoin="round"><path d="M6.96 5.7 L9.6 1.2 H28.3 L32.07 7.7"/><path d="M34.04 11.2 L37.2 17 L28.3 32.6 H22.1"/><path d="M18.2 32.6 H9.6 L0.8 17 L4.99 9.2"/><path d="M10.2 1.5 L19 17 H37.2 M19 17 L10 32.5"/></g><path stroke="#fff" stroke-width="1.4" d="M20.9 4.6h1.2M23.1 4.6h1.2M25.3 4.6h1.2"/></svg>
<!-- translate -->
<svg class="ico" style="left:19px;top:531px" width="27" height="26" viewBox="0 0 27 26"><g fill="none" stroke="#D3E6F8" stroke-width="2.1" stroke-linejoin="miter"><path d="M2.15 1.9 H18.8 V8 L8.6 17.5 H2.15 Z"/><path d="M18.8 8 H25.05 V23.8 H8.6 V17.5"/></g><path fill="none" stroke="#D3E6F8" stroke-width="1.7" d="M5 6.3H13.2M9 4.6V6.3M12 6.3C11.2 9.8 8.6 12.3 5.2 13.6M6.8 9C8 11 9.5 12.3 11.2 13.2"/><path fill="#D3E6F8" d="M14.3 20.9 L16.9 11.6 H18.5 L21.1 20.9 H19.3 L18.7 18.6 H16.7 L16.1 20.9Z M17 17.1 H18.4 L17.7 14.2Z"/></svg>
<!-- paint bucket -->
<svg class="ico" style="left:20px;top:595px" width="26" height="26" viewBox="0 0 26 26"><path fill="none" stroke="#D3E6F8" stroke-width="2" stroke-linejoin="round" stroke-linecap="round" d="M6.8 0.9 L19.6 12.4 L11.6 20.2 Q10.3 21.3 9 20.2 L2 13.6 Q0.9 12.4 2 11.3 L8.3 5"/><path fill="#D3E6F8" d="M3.2 14.5 H17.6 L11.4 20.3 Q10.3 21.1 9.2 20.3 Z"/><path fill="#D3E6F8" d="M21.6 15.8 C23.2 18.3 24.6 20 24.6 21.6 C24.6 23.4 23.3 24.8 21.6 24.8 C19.9 24.8 18.6 23.4 18.6 21.6 C18.6 20 20 18.3 21.6 15.8Z"/></svg>
<!-- user -->
<svg class="ico" style="left:21px;top:659px" width="23" height="25" viewBox="0 0 23 25"><circle cx="11.5" cy="8.6" r="6.5" fill="none" stroke="#D3E6F8" stroke-width="1.9"/><path fill="none" stroke="#D3E6F8" stroke-width="1.9" d="M1.2 24.2 C1.4 18.2 5.6 14.8 11.5 14.8 C17.4 14.8 21.6 18.2 21.8 24.2"/></svg>
<!-- collapse -->
<svg class="ico" style="left:20px;top:724px" width="23" height="24" viewBox="0 0 23 24"><path fill="none" stroke="#D3E6F8" stroke-width="1.9" d="M13.6 1.2 L2.2 11.9 L13.6 22.6 M20.8 1.2 L9.4 11.9 L20.8 22.6"/></svg>
<!-- offline toggle -->
<div class="abs" style="left:80px;top:733px;width:42px;height:21px;border:2px solid #D8DDE8;border-radius:11px;background:#fff"></div>
<div class="abs" style="left:84px;top:737px;width:14px;height:14px;border-radius:7px;background:#D9DEE7"></div>
<div class="t" style="left:132.5px;top:735.7px;font-size:14px;letter-spacing:0.66px;color:#23262E">Offline</div>

</body></html>
